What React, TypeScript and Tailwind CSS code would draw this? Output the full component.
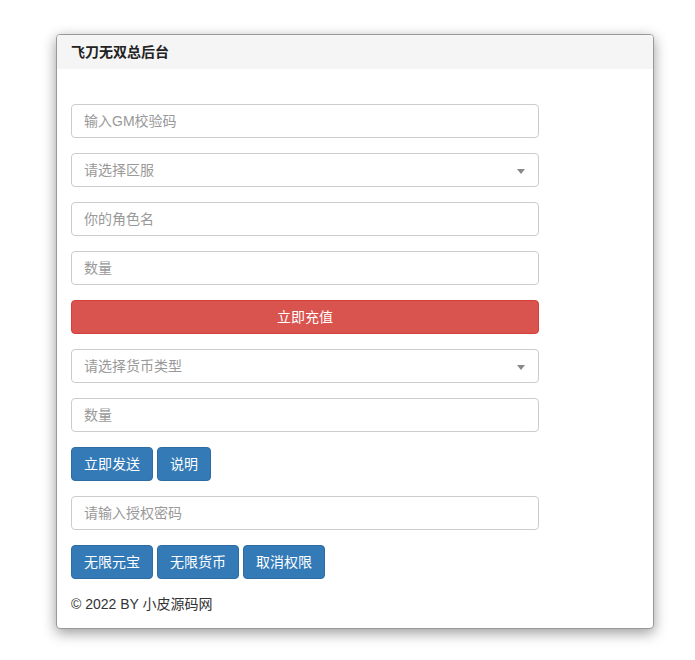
import { useState } from 'react'

function Field({ placeholder }: { placeholder: string }) {
  return (
    <input
      placeholder={placeholder}
      className="block h-[34px] w-[468px] rounded-[4px] border border-[#ccc] bg-white px-3 text-[14px] text-[#555] placeholder-[#999] outline-none"
    />
  )
}

function Picker({ placeholder }: { placeholder: string }) {
  return (
    <div className="relative flex h-[34px] w-[468px] items-center rounded-[4px] border border-[#ccc] bg-white px-3 text-[14px] text-[#999]">
      {placeholder}
      <span className="absolute right-[13px] top-[15px] h-0 w-0 border-x-[4px] border-t-[5px] border-x-transparent border-t-[#888]" />
    </div>
  )
}

function Btn({ children }: { children: React.ReactNode }) {
  return (
    <button className="h-[34px] rounded-[4px] border border-[#2e6da4] bg-[#337ab7] px-3 text-[14px] text-white">
      {children}
    </button>
  )
}

export default function App() {
  const [msg] = useState('© 2022 BY 小皮源码网')

  return (
    <main className="min-h-[660px] bg-white pt-[34px] font-['Liberation_Sans','Noto_Sans_CJK_SC',sans-serif] text-[#333]">
      <div className="ml-[56px] w-[598px] overflow-hidden rounded-[4px] border border-[#999] bg-white shadow-[0_4px_14px_rgba(0,0,0,0.4)]">
        <div className="flex h-[34px] items-center bg-[#f5f5f5] px-[14px] text-[14px] font-bold text-[#222]">
          飞刀无双总后台
        </div>
        <div className="flex flex-col gap-[15px] px-[14px] pb-[14px] pt-[35px]">
          <Field placeholder="输入GM校验码" />
          <Picker placeholder="请选择区服" />
          <Field placeholder="你的角色名" />
          <Field placeholder="数量" />
          <button className="h-[34px] w-[468px] rounded-[4px] border border-[#d43f3a] bg-[#d9534f] text-[14px] text-white">
            立即充值
          </button>
          <Picker placeholder="请选择货币类型" />
          <Field placeholder="数量" />
          <div className="flex gap-[4px]">
            <Btn>立即发送</Btn>
            <Btn>说明</Btn>
          </div>
          <Field placeholder="请输入授权密码" />
          <div className="flex gap-[4px]">
            <Btn>无限元宝</Btn>
            <Btn>无限货币</Btn>
            <Btn>取消权限</Btn>
          </div>
          <p className="text-[14px] leading-[20px]">{msg}</p>
        </div>
      </div>
    </main>
  )
}
